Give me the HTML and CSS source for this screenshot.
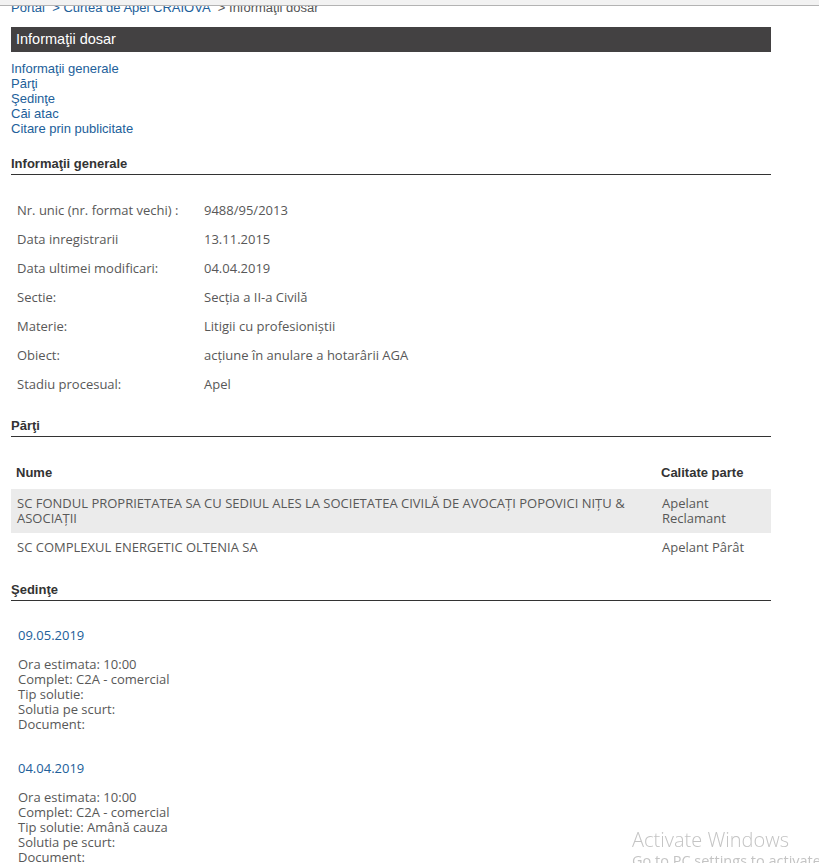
FILE: index.html
```html
<!DOCTYPE html>
<html lang="ro">
<head>
<meta charset="utf-8">
<title>Informaţii dosar</title>
<link rel="stylesheet" href="styles.css">
</head>
<body>
<div class="topbar"></div>
<div class="page">
  <div class="crumbs"><a class="lnk">Portal</a>&nbsp; <a class="lnk">&gt; Curtea de Apel CRAIOVA</a>&nbsp; <span class="cur">&gt; Informaţii dosar</span></div>
  <div class="titlebar">Informaţii dosar</div>
  <ul class="toc">
    <li><a class="lnk">Informaţii generale</a></li>
    <li><a class="lnk">Părţi</a></li>
    <li><a class="lnk">Şedinţe</a></li>
    <li><a class="lnk">Căi atac</a></li>
    <li><a class="lnk">Citare prin publicitate</a></li>
  </ul>

  <h2 class="section">Informaţii generale</h2>
  <table class="info">
    <tr><td class="label">Nr. unic (nr. format vechi) :</td><td>9488/95/2013</td></tr>
    <tr><td class="label">Data inregistrarii</td><td>13.11.2015</td></tr>
    <tr><td class="label">Data ultimei modificari:</td><td>04.04.2019</td></tr>
    <tr><td class="label">Sectie:</td><td>Secția a II-a Civilă</td></tr>
    <tr><td class="label">Materie:</td><td>Litigii cu profesioniștii</td></tr>
    <tr><td class="label">Obiect:</td><td>acțiune în anulare a hotarârii AGA</td></tr>
    <tr><td class="label">Stadiu procesual:</td><td>Apel</td></tr>
  </table>

  <h2 class="section">Părţi</h2>
  <table class="parti">
    <colgroup><col><col class="col-cal"></colgroup>
    <tr><th>Nume</th><th>Calitate parte</th></tr>
    <tr class="alt"><td>SC FONDUL PROPRIETATEA SA CU SEDIUL ALES LA SOCIETATEA CIVILĂ DE AVOCAȚI POPOVICI NIȚU &amp; ASOCIAȚII</td><td>Apelant Reclamant</td></tr>
    <tr><td>SC COMPLEXUL ENERGETIC OLTENIA SA</td><td>Apelant Pârât</td></tr>
  </table>

  <h2 class="section">Şedinţe</h2>
  <div class="sedinte">
    <div class="sedinta">
      <div class="date">09.05.2019</div>
      <div class="details">Ora estimata: 10:00<br>Complet: C2A - comercial<br>Tip solutie: <br>Solutia pe scurt: <br>Document: </div>
    </div>
    <div class="sedinta">
      <div class="date">04.04.2019</div>
      <div class="details">Ora estimata: 10:00<br>Complet: C2A - comercial<br>Tip solutie: Amână cauza<br>Solutia pe scurt: <br>Document: </div>
    </div>
  </div>
</div>
<div class="watermark">
  <div class="wm-title">Activate Windows</div>
  <div class="wm-sub">Go to PC settings to activate Windows.</div>
</div>
</body>
</html>
```

FILE: styles.css
```css
html, body {
  margin: 0;
  padding: 0;
  background: #fff;
  overflow: hidden;
  height: 863px;
}

.topbar {
  position: fixed;
  top: 0;
  left: 0;
  right: 0;
  height: 5px;
  background: #f2f2f2;
  border-bottom: 1px solid #b3b3b3;
  z-index: 5;
}

.page {
  margin-left: 11px;
  width: 760px;
  font-family: "Liberation Sans", Arial, sans-serif;
}

.lnk {
  color: #22609a;
  text-decoration: none;
}

.crumbs {
  font-size: 13px;
  line-height: 15px;
  color: #22609a;
  white-space: nowrap;
}

.crumbs .cur {
  color: #555;
}

.titlebar {
  margin-top: 12px;
  height: 25px;
  line-height: 24px;
  padding-left: 5px;
  background: #434142;
  color: #fff;
  font-size: 14.5px;
}

.toc {
  list-style: none;
  margin: 9px 0 0;
  padding: 0;
  font-size: 13px;
  line-height: 15px;
}

.section {
  margin: 20px 0 0;
  padding: 0 0 3px;
  font-size: 13px;
  line-height: 15px;
  font-weight: bold;
  color: #333;
  border-bottom: 1px solid #333;
}

.info,
.parti {
  width: 100%;
  border-collapse: collapse;
  margin-top: 20px;
  font-family: "Open Sans", "Noto Sans", sans-serif;
  font-size: 13px;
  line-height: 15px;
  color: #585858;
}

.info td {
  padding: 8px 6px 6px;
  vertical-align: top;
}

.info td.label {
  width: 175px;
}

.parti {
  table-layout: fixed;
}

.parti .col-cal {
  width: 115px;
}

.parti th {
  text-align: left;
  font-family: "Liberation Sans", Arial, sans-serif;
  font-weight: bold;
  color: #333;
  padding: 8px 5px 9px;
}

.parti td {
  padding: 7px 6px;
  vertical-align: top;
}

.parti tr.alt td {
  background: #ebebeb;
}

.sedinte {
  margin-top: 27px;
  font-family: "Open Sans", "Noto Sans", sans-serif;
  font-size: 13px;
  line-height: 15px;
  color: #585858;
}

.sedinta {
  padding-left: 7px;
}

.sedinta + .sedinta {
  margin-top: 29px;
}

.date {
  color: #22609a;
  margin-bottom: 14px;
}

.watermark {
  position: fixed;
  left: 632px;
  top: 826px;
  color: #c4c4c4;
  font-family: "Open Sans", "Noto Sans", sans-serif;
  white-space: nowrap;
  z-index: 6;
}

.wm-title {
  font-size: 20px;
  font-weight: 300;
  line-height: 27px;
}

.wm-sub {
  font-size: 14.5px;
  line-height: 16px;
}
```
